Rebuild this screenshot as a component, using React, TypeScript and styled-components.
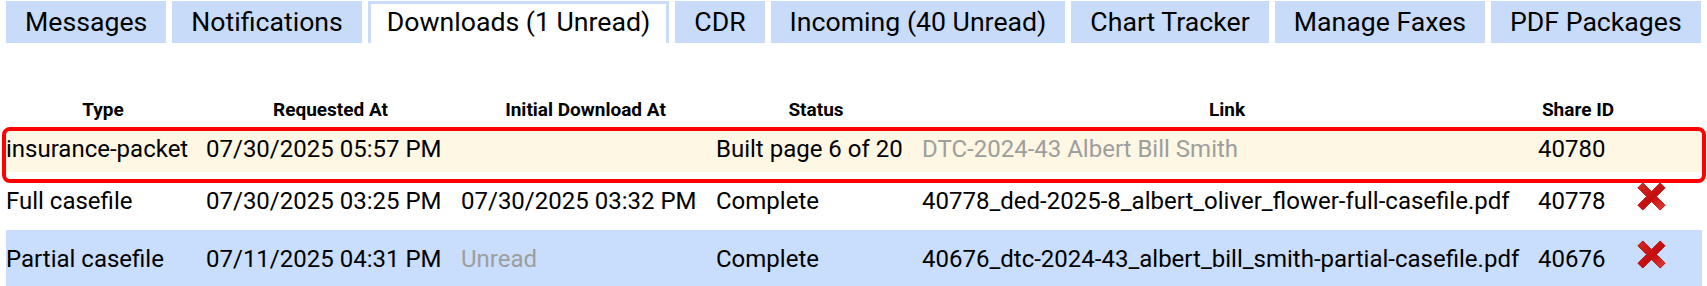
import React from "react";
import styled, { createGlobalStyle, css } from "styled-components";

const GlobalStyle = createGlobalStyle`
  html, body {
    margin: 0;
    padding: 0;
    background: #ffffff;
  }
  body {
    font-family: Roboto, "Liberation Sans", Arial, sans-serif;
    color: #000000;
  }
`;

const TAB_BLUE = "#c8dcfa";

const Page = styled.div`
  width: 1707px;
  box-sizing: border-box;
  padding: 1px 5px 0 6px;
`;

const TabBar = styled.div`
  display: flex;
  gap: 6px;
  height: 42px;
`;

interface TabProps {
  $active?: boolean;
}

const Tab = styled.div<TabProps>`
  box-sizing: border-box;
  height: 42px;
  display: flex;
  align-items: center;
  padding: 0 19px;
  background: ${TAB_BLUE};
  font-size: 26.67px;
  white-space: nowrap;
  ${(props) =>
    props.$active &&
    css`
      background: #ffffff;
      border: 3px solid ${TAB_BLUE};
      border-bottom: none;
      padding: 0 16px 3px 16px;
    `}
`;

const COLUMNS = "197px 255px 255px 206px 616px 86px 81px";

const HeaderRow = styled.div`
  display: grid;
  grid-template-columns: ${COLUMNS};
  height: 32px;
  align-items: center;
  margin-top: 50px;
  margin-bottom: 6px;
`;

const HeadCell = styled.div`
  font-weight: 700;
  font-size: 19px;
  text-align: center;
  padding: 0 3px;
  &:first-child {
    padding-left: 0;
  }
`;

type Tone = "cream" | "white" | "blue";

interface RowProps {
  $tone: Tone;
  $highlight?: boolean;
}

const toneColor: Record<Tone, string> = {
  cream: "#fdf7e4",
  white: "#ffffff",
  blue: "#c9ddfc",
};

const Row = styled.div<RowProps>`
  display: grid;
  grid-template-columns: ${COLUMNS};
  align-items: center;
  height: 58px;
  background: ${(props) => toneColor[props.$tone]};
  ${(props) =>
    props.$highlight &&
    css`
      position: relative;
      height: 41px;
      padding-bottom: 6px;
      box-sizing: border-box;
      border-radius: 4px 4px 0 0;
      &::after {
        content: "";
        position: absolute;
        top: -4px;
        left: -4px;
        right: -4px;
        bottom: -11px;
        border: 4px solid #ff0000;
        border-radius: 8px;
        pointer-events: none;
        z-index: 1;
      }
    `}
`;

interface CellProps {
  $muted?: boolean;
}

const Cell = styled.div<CellProps>`
  font-size: 24px;
  padding: 0 3px;
  white-space: nowrap;
  color: ${(props) => (props.$muted ? "#9e9e9e" : "#000000")};
  &:first-child {
    padding-left: 0;
  }
`;

const ActionCell = styled.div`
  display: flex;
  align-items: center;
  padding: 0 0 10px 15px;
`;

const DeleteIcon = () => (
  <svg width="31" height="31" viewBox="0 0 32 32">
    <defs>
      <linearGradient id="xg" x1="0" y1="0" x2="1" y2="1">
        <stop offset="0" stopColor="#d42a24" />
        <stop offset="0.55" stopColor="#c50d0d" />
        <stop offset="1" stopColor="#e8403c" />
      </linearGradient>
    </defs>
    <polygon
      points="2,7 7,2 16,11 25,2 30,7 21,16 30,25 25,30 16,21 7,30 2,25 11,16"
      fill="url(#xg)"
      stroke="#b80a0a"
      strokeWidth="1"
      strokeLinejoin="round"
    />
  </svg>
);

interface Download {
  type: string;
  requested: string;
  initial: string;
  initialMuted?: boolean;
  status: string;
  link: string;
  linkMuted?: boolean;
  shareId: string;
  canDelete: boolean;
  tone: Tone;
  highlight?: boolean;
}

const downloads: Download[] = [
  {
    type: "insurance-packet",
    requested: "07/30/2025 05:57 PM",
    initial: "",
    status: "Built page 6 of 20",
    link: "DTC-2024-43 Albert Bill Smith",
    linkMuted: true,
    shareId: "40780",
    canDelete: false,
    tone: "cream",
    highlight: true,
  },
  {
    type: "Full casefile",
    requested: "07/30/2025 03:25 PM",
    initial: "07/30/2025 03:32 PM",
    status: "Complete",
    link: "40778_ded-2025-8_albert_oliver_flower-full-casefile.pdf",
    shareId: "40778",
    canDelete: true,
    tone: "white",
  },
  {
    type: "Partial casefile",
    requested: "07/11/2025 04:31 PM",
    initial: "Unread",
    initialMuted: true,
    status: "Complete",
    link: "40676_dtc-2024-43_albert_bill_smith-partial-casefile.pdf",
    shareId: "40676",
    canDelete: true,
    tone: "blue",
  },
];

const tabs = [
  "Messages",
  "Notifications",
  "Downloads (1 Unread)",
  "CDR",
  "Incoming (40 Unread)",
  "Chart Tracker",
  "Manage Faxes",
  "PDF Packages",
];

export default function App() {
  return (
    <Page>
      <GlobalStyle />
      <TabBar>
        {tabs.map((t) => (
          <Tab key={t} $active={t.startsWith("Downloads")}>
            {t}
          </Tab>
        ))}
      </TabBar>
      <HeaderRow>
        <HeadCell>Type</HeadCell>
        <HeadCell>Requested At</HeadCell>
        <HeadCell>Initial Download At</HeadCell>
        <HeadCell>Status</HeadCell>
        <HeadCell>Link</HeadCell>
        <HeadCell>Share ID</HeadCell>
        <HeadCell />
      </HeaderRow>
      {downloads.map((d) => (
        <Row key={d.shareId} $tone={d.tone} $highlight={d.highlight}>
          <Cell>{d.type}</Cell>
          <Cell>{d.requested}</Cell>
          <Cell $muted={d.initialMuted}>{d.initial}</Cell>
          <Cell>{d.status}</Cell>
          <Cell $muted={d.linkMuted}>{d.link}</Cell>
          <Cell>{d.shareId}</Cell>
          <ActionCell>{d.canDelete && <DeleteIcon />}</ActionCell>
        </Row>
      ))}
    </Page>
  );
}
